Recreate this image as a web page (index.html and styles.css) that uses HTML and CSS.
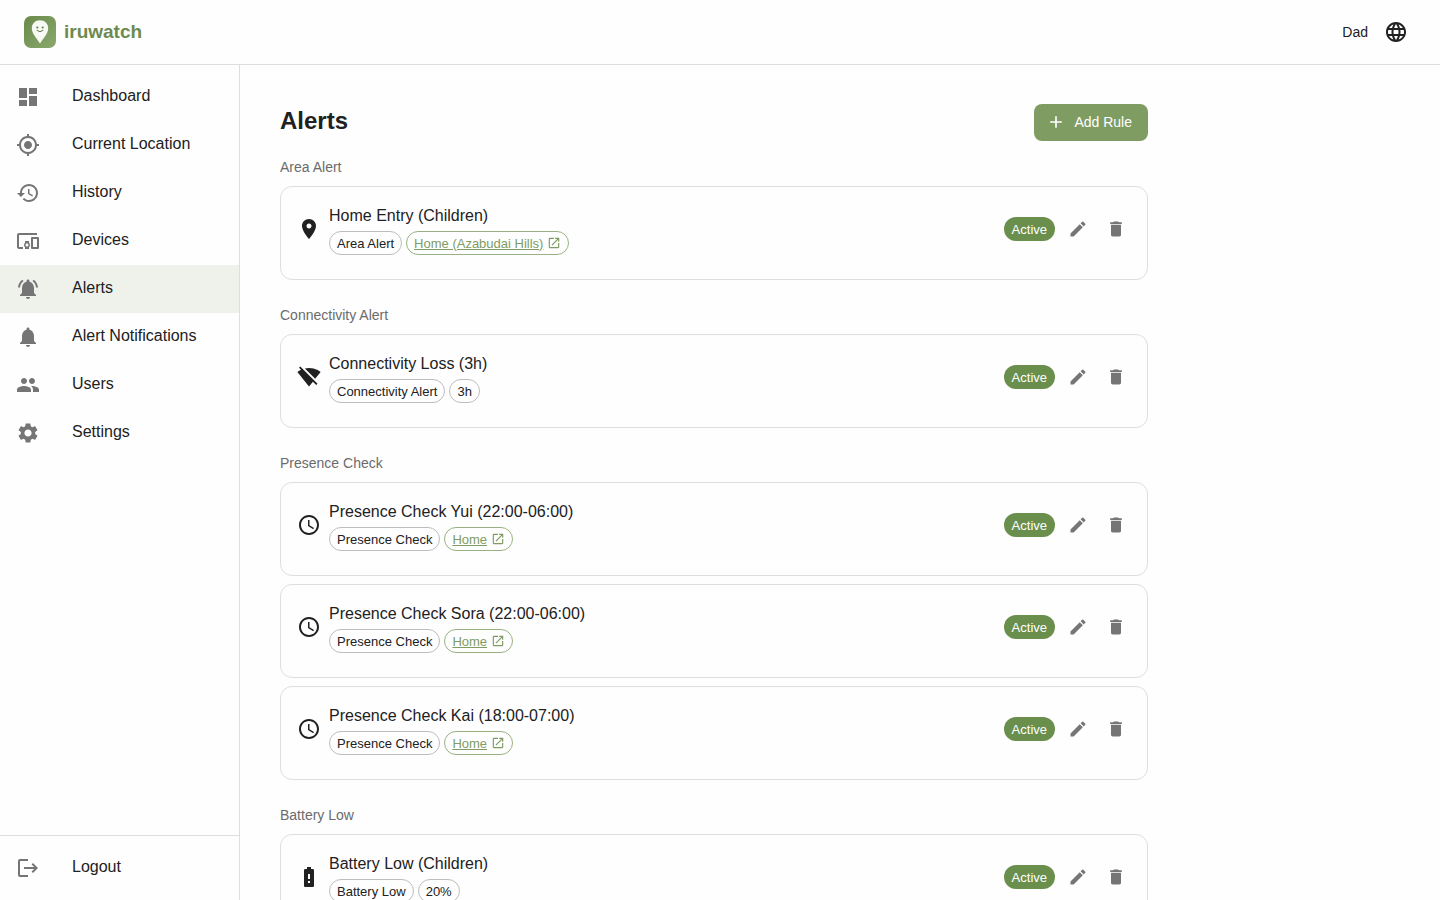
FILE: index.html
```html
<!DOCTYPE html>
<html lang="en">
<head>
<meta charset="utf-8">
<meta name="viewport" content="width=device-width, initial-scale=1">
<title>Alerts - iruwatch</title>
<link rel="stylesheet" href="styles.css">
</head>
<body>
<svg class="sprite" aria-hidden="true">
  <symbol id="i-dashboard" viewBox="0 0 24 24"><path d="M3 13h8V3H3v10zm0 8h8v-6H3v6zm10 0h8V11h-8v10zm0-18v6h8V3h-8z"/></symbol>
  <symbol id="i-location" viewBox="0 0 24 24"><path d="M12 8c-2.21 0-4 1.79-4 4s1.79 4 4 4 4-1.79 4-4-1.79-4-4-4zm8.94 3c-.46-4.17-3.77-7.48-7.94-7.94V1h-2v2.06C6.83 3.52 3.52 6.83 3.06 11H1v2h2.06c.46 4.17 3.77 7.48 7.94 7.94V23h2v-2.06c4.17-.46 7.48-3.77 7.94-7.94H23v-2h-2.06zM12 19c-3.87 0-7-3.13-7-7s3.13-7 7-7 7 3.13 7 7-3.13 7-7 7z"/></symbol>
  <symbol id="i-history" viewBox="0 0 24 24"><path d="M13 3c-4.97 0-9 4.03-9 9H1l3.89 3.89.07.14L9 12H6c0-3.87 3.13-7 7-7s7 3.13 7 7-3.13 7-7 7c-1.93 0-3.68-.79-4.94-2.06l-1.42 1.42C8.27 19.99 10.51 21 13 21c4.97 0 9-4.03 9-9s-4.03-9-9-9zm-1 5v5l4.28 2.54.72-1.21-3.5-2.08V8H12z"/></symbol>
  <symbol id="i-devices" viewBox="0 0 24 24"><path d="M3 6h18V4H3c-1.1 0-2 .9-2 2v12c0 1.1.9 2 2 2h4v-2H3V6zm10 6H9v1.78c-.61.55-1 1.33-1 2.22s.39 1.67 1 2.22V20h4v-1.78c.61-.55 1-1.34 1-2.22s-.39-1.67-1-2.22V12zm-2 5.5c-.83 0-1.5-.67-1.5-1.5s.67-1.5 1.5-1.5 1.5.67 1.5 1.5-.67 1.5-1.5 1.5zM22 8h-6c-.5 0-1 .5-1 1v10c0 .5.5 1 1 1h6c.5 0 1-.5 1-1V9c0-.5-.5-1-1-1zm-1 10h-4v-8h4v8z"/></symbol>
  <symbol id="i-bell-active" viewBox="0 0 24 24"><path d="M7.58 4.08 6.15 2.65C3.75 4.48 2.17 7.3 2.03 10.5h2c.15-2.65 1.51-4.97 3.55-6.42zm12.39 6.42h2c-.15-3.2-1.73-6.02-4.12-7.85l-1.42 1.43c2.02 1.45 3.39 3.77 3.54 6.42zM18 11c0-3.07-1.64-5.64-4.5-6.32V4c0-.83-.67-1.5-1.5-1.5s-1.5.67-1.5 1.5v.68C7.63 5.36 6 7.92 6 11v5l-2 2v1h16v-1l-2-2v-5zm-6 11c.14 0 .27-.01.4-.04.65-.14 1.18-.58 1.44-1.18.1-.24.15-.5.15-.78h-4c.01 1.1.9 2 2.01 2z"/></symbol>
  <symbol id="i-bell" viewBox="0 0 24 24"><path d="M12 22c1.1 0 2-.9 2-2h-4c0 1.1.89 2 2 2zm6-6v-5c0-3.07-1.64-5.64-4.5-6.32V4c0-.83-.67-1.5-1.5-1.5s-1.5.67-1.5 1.5v.68C7.63 5.36 6 7.92 6 11v5l-2 2v1h16v-1l-2-2z"/></symbol>
  <symbol id="i-people" viewBox="0 0 24 24"><path d="M16 11c1.66 0 2.99-1.34 2.99-3S17.66 5 16 5c-1.66 0-3 1.34-3 3s1.34 3 3 3zm-8 0c1.66 0 2.99-1.34 2.99-3S9.66 5 8 5C6.34 5 5 6.34 5 8s1.34 3 3 3zm0 2c-2.33 0-7 1.17-7 3.5V19h14v-2.5c0-2.33-4.67-3.5-7-3.5zm8 0c-.29 0-.62.02-.97.05 1.16.84 1.97 1.97 1.97 3.45V19h6v-2.5c0-2.33-4.67-3.5-7-3.5z"/></symbol>
  <symbol id="i-settings" viewBox="0 0 24 24"><path d="M19.14 12.94c.04-.3.06-.61.06-.94 0-.32-.02-.64-.07-.94l2.03-1.58c.18-.14.23-.41.12-.61l-1.92-3.32c-.12-.22-.37-.29-.59-.22l-2.39.96c-.5-.38-1.03-.7-1.62-.94l-.36-2.54c-.04-.24-.24-.41-.48-.41h-3.84c-.24 0-.43.17-.47.41l-.36 2.54c-.59.24-1.13.57-1.62.94l-2.39-.96c-.22-.08-.47 0-.59.22L2.74 8.87c-.12.21-.08.47.12.61l2.03 1.58c-.05.3-.09.63-.09.94s.02.64.07.94l-2.03 1.58c-.18.14-.23.41-.12.61l1.92 3.32c.12.22.37.29.59.22l2.39-.96c.5.38 1.03.7 1.62.94l.36 2.54c.05.24.24.41.48.41h3.84c.24 0 .44-.17.47-.41l.36-2.54c.59-.24 1.13-.56 1.62-.94l2.39.96c.22.08.47 0 .59-.22l1.92-3.32c.12-.22.07-.47-.12-.61l-2.01-1.58zM12 15.6c-1.98 0-3.6-1.62-3.6-3.6s1.62-3.6 3.6-3.6 3.6 1.62 3.6 3.6-1.62 3.6-3.6 3.6z"/></symbol>
  <symbol id="i-logout" viewBox="0 0 24 24"><path d="m17 7-1.41 1.41L18.17 11H8v2h10.17l-2.58 2.58L17 17l5-5zM4 5h8V3H4c-1.1 0-2 .9-2 2v14c0 1.1.9 2 2 2h8v-2H4V5z"/></symbol>
  <symbol id="i-globe" viewBox="0 0 24 24"><path d="M11.99 2C6.47 2 2 6.48 2 12s4.47 10 9.99 10C17.52 22 22 17.52 22 12S17.52 2 11.99 2zm6.93 6h-2.95c-.32-1.25-.78-2.45-1.38-3.56 1.84.63 3.37 1.91 4.33 3.56zM12 4.04c.83 1.2 1.48 2.53 1.91 3.96h-3.82c.43-1.43 1.08-2.76 1.91-3.96zM4.26 14C4.1 13.36 4 12.69 4 12s.1-1.36.26-2h3.38c-.08.66-.14 1.32-.14 2s.06 1.34.14 2H4.26zm.82 2h2.95c.32 1.25.78 2.45 1.38 3.56-1.84-.63-3.37-1.9-4.33-3.56zm2.95-8H5.08c.96-1.66 2.49-2.93 4.33-3.56C8.81 5.55 8.35 6.75 8.03 8zM12 19.96c-.83-1.2-1.48-2.53-1.91-3.96h3.82c-.43 1.43-1.08 2.76-1.91 3.96zM14.34 14H9.66c-.09-.66-.16-1.32-.16-2s.07-1.35.16-2h4.68c.09.65.16 1.32.16 2s-.07 1.34-.16 2zm.25 5.56c.6-1.11 1.06-2.31 1.38-3.56h2.95c-.96 1.65-2.49 2.93-4.33 3.56zM16.36 14c.08-.66.14-1.32.14-2s-.06-1.34-.14-2h3.38c.16.64.26 1.31.26 2s-.1 1.36-.26 2h-3.38z"/></symbol>
  <symbol id="i-plus" viewBox="0 0 24 24"><path d="M19 13h-6v6h-2v-6H5v-2h6V5h2v6h6v2z"/></symbol>
  <symbol id="i-pin" viewBox="0 0 24 24"><path d="M12 2C8.13 2 5 5.13 5 9c0 5.25 7 13 7 13s7-7.75 7-13c0-3.87-3.13-7-7-7zm0 9.5c-1.38 0-2.5-1.12-2.5-2.5s1.12-2.5 2.5-2.5 2.5 1.12 2.5 2.5-1.12 2.5-2.5 2.5z"/></symbol>
  <symbol id="i-signal-off" viewBox="0 0 24 24"><path d="M23.64 7c-.45-.34-4.93-4-11.64-4-1.5 0-2.89.19-4.15.48L18.18 13.8 23.64 7zm-6.6 8.22L3.27 1.44 2 2.72l2.05 2.06C1.91 5.76.59 6.82.36 7l11.63 14.49.01.01.01-.01 3.9-4.86 3.32 3.32 1.27-1.27-3.46-3.46z"/></symbol>
  <symbol id="i-clock" viewBox="0 0 24 24"><path d="M11.99 2C6.47 2 2 6.48 2 12s4.47 10 9.99 10C17.52 22 22 17.52 22 12S17.52 2 11.99 2zM12 20c-4.42 0-8-3.58-8-8s3.58-8 8-8 8 3.58 8 8-3.58 8-8 8zm.5-13H11v6l5.25 3.15.75-1.23-4.5-2.67z"/></symbol>
  <symbol id="i-battery" viewBox="0 0 24 24"><path d="M15.67 4H14V2h-4v2H8.33C7.6 4 7 4.6 7 5.33v15.33C7 21.4 7.6 22 8.33 22h7.33c.74 0 1.34-.6 1.34-1.33V5.33C17 4.6 16.4 4 15.67 4zM13 18h-2v-2h2v2zm0-4h-2V9h2v5z"/></symbol>
  <symbol id="i-open" viewBox="0 0 24 24"><path d="M19 19H5V5h7V3H5c-1.11 0-2 .9-2 2v14c0 1.1.89 2 2 2h14c1.1 0 2-.9 2-2v-7h-2v7zM14 3v2h3.59l-9.83 9.83 1.41 1.41L19 6.41V10h2V3h-7z"/></symbol>
  <symbol id="i-edit" viewBox="0 0 24 24"><path d="M3 17.25V21h3.75L17.81 9.94l-3.75-3.75L3 17.25zM20.71 7.04c.39-.39.39-1.02 0-1.41l-2.34-2.34a.9959.9959 0 0 0-1.41 0l-1.83 1.83 3.75 3.75 1.83-1.83z"/></symbol>
  <symbol id="i-delete" viewBox="0 0 24 24"><path d="M6 19c0 1.1.9 2 2 2h8c1.1 0 2-.9 2-2V7H6v12zM19 4h-3.500l-1-1h-5l-1 1H5v2h14V4z"/></symbol>
</svg>

<div class="app">
  <header class="topbar">
    <a class="brand" href="#">
      <svg class="brand-mark" viewBox="0 0 32 32" aria-hidden="true">
        <defs><linearGradient id="mark" x1="0" y1="0" x2="1" y2="1"><stop offset="0" stop-color="#6a8a4b"/><stop offset="1" stop-color="#8aa86c"/></linearGradient></defs>
        <rect width="32" height="32" rx="7" fill="url(#mark)"/>
        <path d="M16 4.200c-4.700 0-8.200 3.500-8.200 8 0 5.600 5.200 10.300 8.200 15.300 3-5 8.200-9.700 8.200-15.300 0-4.500-3.500-8-8.200-8z" fill="#f6faf3"/>
        <circle cx="13.300" cy="11.500" r="1" fill="#5e7746"/><circle cx="18.700" cy="11.500" r="1" fill="#5e7746"/>
        <path d="M13 14.500q3 2.700 6 0" fill="none" stroke="#5e7746" stroke-width="1" stroke-linecap="round"/>
      </svg>
      <span class="brand-name">iruwatch</span>
    </a>
    <div class="account">
      <span class="account-name">Dad</span>
      <button class="icon-button large" type="button" aria-label="Language"><svg class="icon"><use href="#i-globe"/></svg></button>
    </div>
  </header>

  <div class="body">
    <aside class="sidebar">
      <nav class="nav" aria-label="Main">
        <a class="nav-item" href="#"><svg class="icon"><use href="#i-dashboard"/></svg><span>Dashboard</span></a>
        <a class="nav-item" href="#"><svg class="icon"><use href="#i-location"/></svg><span>Current Location</span></a>
        <a class="nav-item" href="#"><svg class="icon"><use href="#i-history"/></svg><span>History</span></a>
        <a class="nav-item" href="#"><svg class="icon"><use href="#i-devices"/></svg><span>Devices</span></a>
        <a class="nav-item selected" href="#" aria-current="page"><svg class="icon"><use href="#i-bell-active"/></svg><span>Alerts</span></a>
        <a class="nav-item" href="#"><svg class="icon"><use href="#i-bell"/></svg><span>Alert Notifications</span></a>
        <a class="nav-item" href="#"><svg class="icon"><use href="#i-people"/></svg><span>Users</span></a>
        <a class="nav-item" href="#"><svg class="icon"><use href="#i-settings"/></svg><span>Settings</span></a>
      </nav>
      <div class="nav nav-footer">
        <button class="nav-item" type="button"><svg class="icon"><use href="#i-logout"/></svg><span>Logout</span></button>
      </div>
    </aside>

    <main class="main">
      <div class="content">
        <div class="page-head">
          <h1 class="page-title">Alerts</h1>
          <button class="add-button" type="button"><svg class="icon small"><use href="#i-plus"/></svg>Add Rule</button>
        </div>

        <section class="group">
          <h2 class="group-title">Area Alert</h2>
          <article class="card">
            <svg class="icon"><use href="#i-pin"/></svg>
            <div class="card-text">
              <h3 class="card-title">Home Entry (Children)</h3>
              <div class="chips"><span class="chip">Area Alert</span><a class="chip link" href="#"><span class="chip-label">Home (Azabudai Hills)</span><svg class="icon tiny"><use href="#i-open"/></svg></a></div>
            </div>
            <div class="actions">
              <button class="status" type="button">Active</button>
              <button class="icon-button" type="button" aria-label="Edit"><svg class="icon small"><use href="#i-edit"/></svg></button>
              <button class="icon-button" type="button" aria-label="Delete"><svg class="icon small"><use href="#i-delete"/></svg></button>
            </div>
          </article>
        </section>

        <section class="group">
          <h2 class="group-title">Connectivity Alert</h2>
          <article class="card">
            <svg class="icon"><use href="#i-signal-off"/></svg>
            <div class="card-text">
              <h3 class="card-title">Connectivity Loss (3h)</h3>
              <div class="chips"><span class="chip">Connectivity Alert</span><span class="chip">3h</span></div>
            </div>
            <div class="actions">
              <button class="status" type="button">Active</button>
              <button class="icon-button" type="button" aria-label="Edit"><svg class="icon small"><use href="#i-edit"/></svg></button>
              <button class="icon-button" type="button" aria-label="Delete"><svg class="icon small"><use href="#i-delete"/></svg></button>
            </div>
          </article>
        </section>

        <section class="group">
          <h2 class="group-title">Presence Check</h2>
          <article class="card">
            <svg class="icon"><use href="#i-clock"/></svg>
            <div class="card-text">
              <h3 class="card-title">Presence Check Yui (22:00-06:00)</h3>
              <div class="chips"><span class="chip">Presence Check</span><a class="chip link" href="#"><span class="chip-label">Home</span><svg class="icon tiny"><use href="#i-open"/></svg></a></div>
            </div>
            <div class="actions">
              <button class="status" type="button">Active</button>
              <button class="icon-button" type="button" aria-label="Edit"><svg class="icon small"><use href="#i-edit"/></svg></button>
              <button class="icon-button" type="button" aria-label="Delete"><svg class="icon small"><use href="#i-delete"/></svg></button>
            </div>
          </article>
          <article class="card">
            <svg class="icon"><use href="#i-clock"/></svg>
            <div class="card-text">
              <h3 class="card-title">Presence Check Sora (22:00-06:00)</h3>
              <div class="chips"><span class="chip">Presence Check</span><a class="chip link" href="#"><span class="chip-label">Home</span><svg class="icon tiny"><use href="#i-open"/></svg></a></div>
            </div>
            <div class="actions">
              <button class="status" type="button">Active</button>
              <button class="icon-button" type="button" aria-label="Edit"><svg class="icon small"><use href="#i-edit"/></svg></button>
              <button class="icon-button" type="button" aria-label="Delete"><svg class="icon small"><use href="#i-delete"/></svg></button>
            </div>
          </article>
          <article class="card">
            <svg class="icon"><use href="#i-clock"/></svg>
            <div class="card-text">
              <h3 class="card-title">Presence Check Kai (18:00-07:00)</h3>
              <div class="chips"><span class="chip">Presence Check</span><a class="chip link" href="#"><span class="chip-label">Home</span><svg class="icon tiny"><use href="#i-open"/></svg></a></div>
            </div>
            <div class="actions">
              <button class="status" type="button">Active</button>
              <button class="icon-button" type="button" aria-label="Edit"><svg class="icon small"><use href="#i-edit"/></svg></button>
              <button class="icon-button" type="button" aria-label="Delete"><svg class="icon small"><use href="#i-delete"/></svg></button>
            </div>
          </article>
        </section>

        <section class="group">
          <h2 class="group-title">Battery Low</h2>
          <article class="card">
            <svg class="icon"><use href="#i-battery"/></svg>
            <div class="card-text">
              <h3 class="card-title">Battery Low (Children)</h3>
              <div class="chips"><span class="chip">Battery Low</span><span class="chip">20%</span></div>
            </div>
            <div class="actions">
              <button class="status" type="button">Active</button>
              <button class="icon-button" type="button" aria-label="Edit"><svg class="icon small"><use href="#i-edit"/></svg></button>
              <button class="icon-button" type="button" aria-label="Delete"><svg class="icon small"><use href="#i-delete"/></svg></button>
            </div>
          </article>
        </section>
      </div>
    </main>
  </div>
</div>
</body>
</html>
```

FILE: styles.css
```css
:root {
  --text: #212121;
  --muted: #757575;
  --line: #dedede;
  --green: #7f9c62;
  --green-dark: #6a8f4d;
}

* {
  box-sizing: border-box;
}

body {
  margin: 0;
  background: #fefefe;
  color: var(--text);
  font-family: "Liberation Sans", Arial, sans-serif;
  font-size: 16px;
  line-height: 24px;
}

h1,
h2,
h3 {
  margin: 0;
}

button {
  border: 0;
  background: none;
  color: inherit;
  font: inherit;
  cursor: pointer;
}

.sprite {
  display: none;
}

.icon {
  flex: none;
  width: 24px;
  height: 24px;
  fill: currentColor;
}

.icon.small {
  width: 20px;
  height: 20px;
}

.icon.tiny {
  width: 14px;
  height: 14px;
}

.app {
  display: flex;
  flex-direction: column;
  height: 100vh;
}

.topbar {
  display: flex;
  flex: none;
  align-items: center;
  justify-content: space-between;
  padding: 12px 24px;
  border-bottom: 1px solid var(--line);
}

.brand {
  display: flex;
  align-items: center;
  gap: 8px;
  color: #6d8a4f;
  text-decoration: none;
}

.brand-mark {
  width: 32px;
  height: 32px;
}

.brand-name {
  font-size: 19px;
  font-weight: 700;
}

.account {
  display: flex;
  align-items: center;
  gap: 8px;
}

.account-name {
  font-size: 14px;
}

.body {
  display: flex;
  flex: 1;
  min-height: 0;
}

.sidebar {
  display: flex;
  flex: none;
  flex-direction: column;
  justify-content: space-between;
  width: 240px;
  border-right: 1px solid var(--line);
}

.nav {
  padding: 8px 0;
}

.nav-footer {
  border-top: 1px solid var(--line);
}

.nav-item {
  display: flex;
  align-items: center;
  gap: 32px;
  width: 100%;
  height: 48px;
  padding: 0 16px;
  color: inherit;
  text-decoration: none;
}

.nav-item span {
  padding-bottom: 2px;
}

.nav-item .icon {
  color: var(--muted);
}

.nav-item.selected {
  background: #eff2eb;
}

.main {
  flex: 1;
  min-width: 0;
  padding: 39px 24px;
  overflow-y: auto;
  scrollbar-width: none;
}

.content {
  max-width: 900px;
  padding: 0 16px;
}

.page-head {
  display: flex;
  align-items: center;
  justify-content: space-between;
  margin-bottom: 15px;
}

.page-title {
  padding-bottom: 4px;
  font-size: 24px;
  line-height: 32px;
}

.add-button {
  display: flex;
  align-items: center;
  gap: 8px;
  padding: 6px 16px 7px 12px;
  border-radius: 8px;
  background: var(--green);
  color: #fff;
  font-size: 14px;
}

.group {
  display: flex;
  flex-direction: column;
  gap: 8px;
  margin-bottom: 24px;
}

.group-title {
  color: #6b6b6b;
  font-size: 14px;
  font-weight: 400;
  line-height: 22px;
}

.card {
  display: flex;
  align-items: center;
  gap: 8px;
  padding: 16px 16px 24px;
  border: 1px solid var(--line);
  border-radius: 12px;
}

.card-text {
  display: flex;
  flex: 1;
  flex-direction: column;
  gap: 2px;
  min-width: 0;
}

.card-title {
  font-size: 16px;
  font-weight: 400;
  line-height: 26px;
}

.chips {
  display: flex;
  flex-wrap: wrap;
  gap: 4px;
}

.chip {
  display: flex;
  align-items: center;
  gap: 4px;
  height: 24px;
  padding: 0 7px;
  border: 1px solid #bdbdbd;
  border-radius: 12px;
  font-size: 13px;
  line-height: 21px;
}

.chip.link {
  border-color: #99b182;
  color: var(--green);
  text-decoration: none;
}

.chip-label {
  text-decoration: underline;
}

.actions {
  display: flex;
  align-items: center;
  gap: 8px;
}

.status {
  height: 24px;
  padding: 1px 8px 0;
  border-radius: 12px;
  background: var(--green-dark);
  color: #fff;
  font-size: 13px;
  line-height: 23px;
}

.icon-button {
  display: flex;
  padding: 5px;
  border-radius: 50%;
  color: var(--muted);
}

.icon-button.large {
  padding: 8px;
  color: var(--text);
}
```
